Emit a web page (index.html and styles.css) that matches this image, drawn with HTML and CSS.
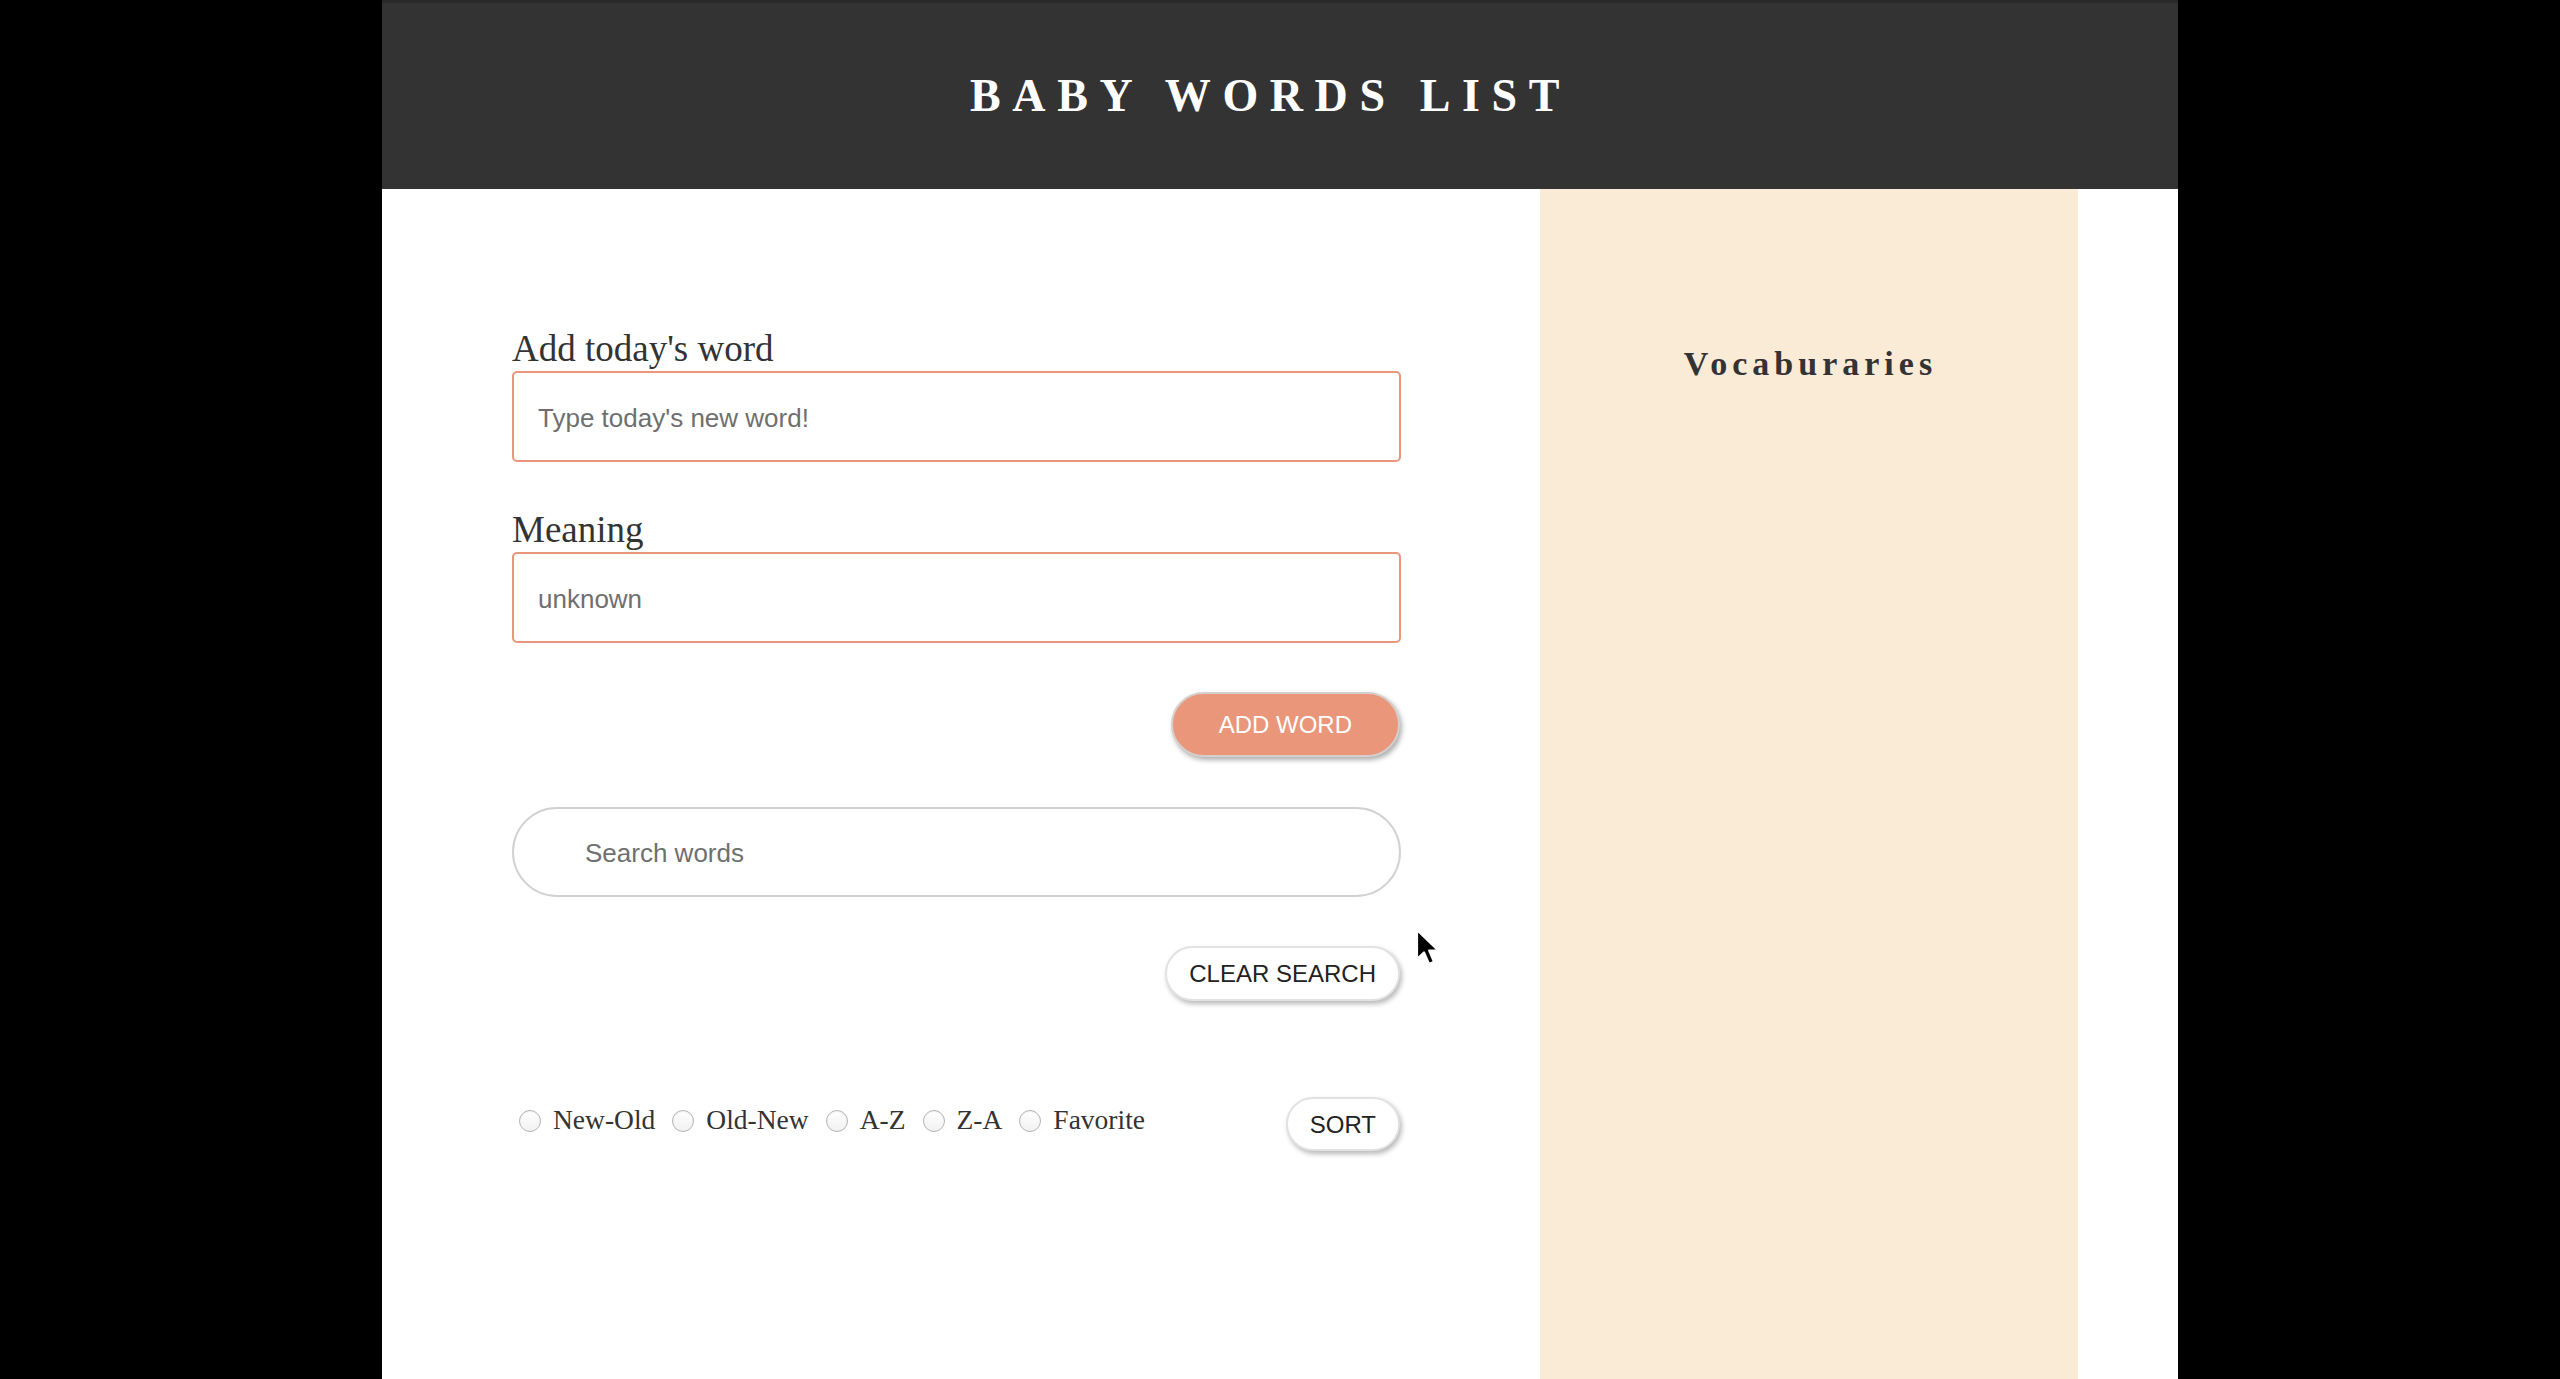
FILE: index.html
```html
<!DOCTYPE html>
<html lang="en">
<head>
<meta charset="utf-8">
<title>Baby Words List</title>
<link rel="stylesheet" href="styles.css">
</head>
<body>
<div class="page">
  <header class="topbar">
    <h1 class="title">BABY WORDS LIST</h1>
  </header>
  <main class="layout">
    <section class="form-col">
      <div class="field">
        <label class="field-label" for="word">Add today's word</label>
        <input class="text-input" id="word" type="text" placeholder="Type today's new word!">
      </div>
      <div class="field field-next">
        <label class="field-label" for="meaning">Meaning</label>
        <input class="text-input" id="meaning" type="text" placeholder="unknown">
      </div>
      <div class="btn-row add-row">
        <button class="btn btn-primary" type="button">ADD WORD</button>
      </div>
      <input class="search-input" type="text" placeholder="Search words">
      <div class="btn-row clear-row">
        <button class="btn btn-light" type="button">CLEAR SEARCH</button>
      </div>
      <div class="sort-row">
        <div class="radios">
          <label class="radio-item"><input class="radio" type="radio" name="sort">New-Old</label>
          <label class="radio-item"><input class="radio" type="radio" name="sort">Old-New</label>
          <label class="radio-item"><input class="radio" type="radio" name="sort">A-Z</label>
          <label class="radio-item"><input class="radio" type="radio" name="sort">Z-A</label>
          <label class="radio-item"><input class="radio" type="radio" name="sort">Favorite</label>
        </div>
        <button class="btn btn-light btn-sort" type="button">SORT</button>
      </div>
    </section>
    <aside class="sidebar">
      <h2 class="vocab-title">Vocaburaries</h2>
    </aside>
    <div class="gutter"></div>
  </main>
  <svg class="cursor" width="26" height="40" viewBox="0 0 26 40" aria-hidden="true">
    <path d="M2 2 L2 31 L9 24.5 L14 36 L19 33.8 L14.2 22.6 L23.5 22.6 Z" fill="#000" stroke="#fff" stroke-width="2.2" stroke-linejoin="round"/>
  </svg>
</div>
</body>
</html>
```
FILE: styles.css
```css
html, body {
  margin: 0;
  padding: 0;
  background: #000;
}

.page {
  position: relative;
  width: 1796px;
  min-height: 1379px;
  margin: 0 auto;
  background: #fff;
  font-family: "Liberation Serif", "Times New Roman", serif;
  color: #333;
}

.topbar {
  box-sizing: border-box;
  height: 189px;
  border-top: 3px solid #29292c;
  background: #333333;
  display: flex;
  align-items: center;
  justify-content: center;
}

.title {
  margin: 0;
  padding-right: 19px;
  font-family: "Liberation Serif", "Times New Roman", serif;
  font-weight: bold;
  font-size: 46px;
  letter-spacing: 11.6px;
  line-height: 1;
  color: #fff;
}

.layout {
  display: flex;
  min-height: 1190px;
}

.form-col {
  box-sizing: border-box;
  width: 1158px;
  padding: 139px 139px 0 130px;
  display: flex;
  flex-direction: column;
}

.field {
  display: flex;
  flex-direction: column;
}

.field-next {
  margin-top: 47px;
}

.field-label {
  display: block;
  font-size: 37px;
  line-height: 42px;
  color: #333;
  margin-bottom: 1px;
}

.text-input,
.search-input {
  box-sizing: border-box;
  width: 889px;
  height: 91px;
  margin: 0;
  font-family: "Liberation Sans", Arial, sans-serif;
  font-size: 26px;
  color: #333;
  background: #fff;
  outline: none;
}

.text-input {
  border: 2px solid #e9967a;
  border-radius: 5px;
  padding: 4px 24px 0;
}

.search-input {
  height: 90px;
  margin-top: 50px;
  border: 2px solid #d2d2d2;
  border-radius: 45px;
  padding: 3px 71px 0;
}

.text-input::placeholder,
.search-input::placeholder {
  color: #6f6f6f;
}

.btn-row {
  display: flex;
  justify-content: flex-end;
}

.add-row {
  margin-top: 49px;
}

.clear-row {
  margin-top: 49px;
}

.btn {
  box-sizing: border-box;
  margin: 0 1px 0 0;
  padding-top: 2px;
  font-family: "Liberation Sans", Arial, sans-serif;
  font-size: 24px;
  border-radius: 40px;
  cursor: pointer;
  white-space: nowrap;
}

.btn-primary {
  height: 65px;
  padding-left: 46px;
  padding-right: 46px;
  background: #e9967a;
  color: #fff;
  border: 2px solid #d4cfcc;
  box-shadow: 2px 3px 5px rgba(0, 0, 0, 0.32);
}

.btn-light {
  height: 55px;
  padding-left: 22px;
  padding-right: 22px;
  background: #fff;
  color: #222;
  border: 2px solid #e2e2e2;
  box-shadow: 2px 3px 5px rgba(0, 0, 0, 0.28);
}

.btn-sort {
  height: 54px;
}

.sort-row {
  margin-top: 96px;
  display: flex;
  align-items: center;
  justify-content: space-between;
}

.radios {
  display: flex;
  align-items: center;
  gap: 17px;
  padding-left: 7px;
  padding-bottom: 8px;
}

.radio-item {
  display: flex;
  align-items: center;
  font-size: 27.5px;
  line-height: 32px;
  color: #333;
}

.radio {
  -webkit-appearance: none;
  appearance: none;
  box-sizing: border-box;
  width: 22px;
  height: 22px;
  margin: 2px 12px 0 0;
  border: 1.6px solid #b4b4b4;
  border-radius: 50%;
  background: linear-gradient(#ffffff, #f1f1f1);
  box-shadow: inset 0 1px 1px rgba(0, 0, 0, 0.06);
}

.sidebar {
  box-sizing: border-box;
  width: 538px;
  background: #faebd7;
  padding-top: 156px;
}

.vocab-title {
  margin: 0;
  padding-left: 3px;
  text-align: center;
  font-family: "Liberation Serif", "Times New Roman", serif;
  font-weight: bold;
  font-size: 34px;
  letter-spacing: 5px;
  line-height: normal;
  color: #333;
}

.gutter {
  flex: 1;
}

.cursor {
  position: absolute;
  left: 1033px;
  top: 928px;
}
```
